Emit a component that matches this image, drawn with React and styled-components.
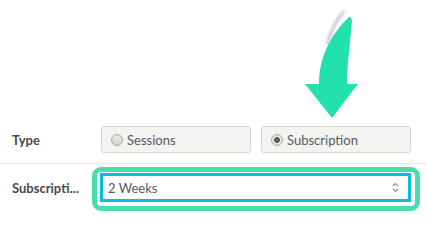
import React from 'react'
import styled, { createGlobalStyle } from 'styled-components'

const GlobalStyle = createGlobalStyle`
  html, body {
    margin: 0;
    padding: 0;
    background: #fff;
  }
  body {
    font-family: Lato, "Open Sans", sans-serif;
  }
`

const colors = {
  label: '#4a4a4a',
  text: '#555b60',
  teal: '#48dcb0',
  arrow: '#22e1aa',
  cyan: '#08bedf',
  optionBg: '#f3f3f1',
  optionBorder: '#d9d4cc',
  divider: '#e8e8e8',
}

const Page = styled.div`
  position: relative;
  width: 427px;
  height: 214px;
  overflow: hidden;
`

const ArrowArea = styled.div`
  height: 120px;
  padding-left: 300px;
  box-sizing: border-box;
`

const Row = styled.div`
  display: grid;
  grid-template-columns: 88px 1fr;
  align-items: center;
  padding: ${p => p.pad};
  border-bottom: ${p => (p.divided ? `1px solid ${colors.divider}` : 'none')};
  padding-left: 12px;
  padding-right: 16px;
`

const Label = styled.div`
  font-size: 13px;
  font-weight: 700;
  color: ${colors.label};
  white-space: nowrap;
`

const Options = styled.div`
  display: grid;
  grid-template-columns: 1fr 1fr;
  gap: 10px;
  margin-left: 1px;
`

const Option = styled.label`
  display: flex;
  align-items: center;
  gap: 4px;
  height: 27px;
  box-sizing: border-box;
  padding-left: 9px;
  background: ${colors.optionBg};
  border: 1px solid ${colors.optionBorder};
  border-radius: 3px;
  font-size: 13px;
  color: ${colors.text};
`

const Radio = styled.span`
  width: 12px;
  height: 12px;
  box-sizing: border-box;
  border-radius: 50%;
  border: 1px solid #a9a49c;
  background: ${p => (p.checked
    ? 'radial-gradient(circle, #5f5a55 0 2.6px, #e9e6e1 3.2px)'
    : 'linear-gradient(#ebe8e3, #d6d2cb)')};
  flex-shrink: 0;
`

const Select = styled.div`
  display: flex;
  align-items: center;
  justify-content: space-between;
  height: 29px;
  box-sizing: border-box;
  padding: 0 9px 0 5px;
  border: 3px solid ${colors.cyan};
  background: #fff;
  font-size: 13px;
  color: ${colors.text};
`

const Highlight = styled.div`
  position: absolute;
  left: 92px;
  top: 167px;
  width: 328px;
  height: 44px;
  box-sizing: border-box;
  border: 5px solid ${colors.teal};
  border-radius: 9px;
  box-shadow: 0 -3px 0 #fff;
  pointer-events: none;
`

function Arrow() {
  return (
    <svg width="62" height="120" viewBox="0 0 62 120">
      <defs>
        <filter id="soft" x="-50%" y="-50%" width="200%" height="200%">
          <feGaussianBlur stdDeviation="1.4" />
        </filter>
      </defs>
      <path d="M44 11 C37 19 31 31 27 44" stroke="#8a8a8a" strokeWidth="2.4" fill="none" opacity="0.6" filter="url(#soft)" />
      <path
        d="M47 19 Q51 14 52 21 C50 45 47 65 47 84 L58 84 L32 118 L5 84 L19 84 C19 58 30 36 47 19 Z"
        fill={colors.arrow}
      />
    </svg>
  )
}

function Chevrons() {
  return (
    <svg width="7" height="11" viewBox="0 0 7 11">
      <path d="M1 4 L3.5 1.5 L6 4 M1 7 L3.5 9.5 L6 7" stroke="#8c8c8c" strokeWidth="1.1" fill="none" />
    </svg>
  )
}

export default function App() {
  return (
    <Page>
      <GlobalStyle />
      <ArrowArea>
        <Arrow />
      </ArrowArea>
      <Row pad="6px 0 10px" divided>
        <Label>Type</Label>
        <Options>
          <Option>
            <Radio />
            Sessions
          </Option>
          <Option>
            <Radio checked />
            Subscription
          </Option>
        </Options>
      </Row>
      <Row pad="9px 0 12px">
        <Label>Subscripti...</Label>
        <Select>
          <span>2 Weeks</span>
          <Chevrons />
        </Select>
      </Row>
      <Highlight />
    </Page>
  )
}
